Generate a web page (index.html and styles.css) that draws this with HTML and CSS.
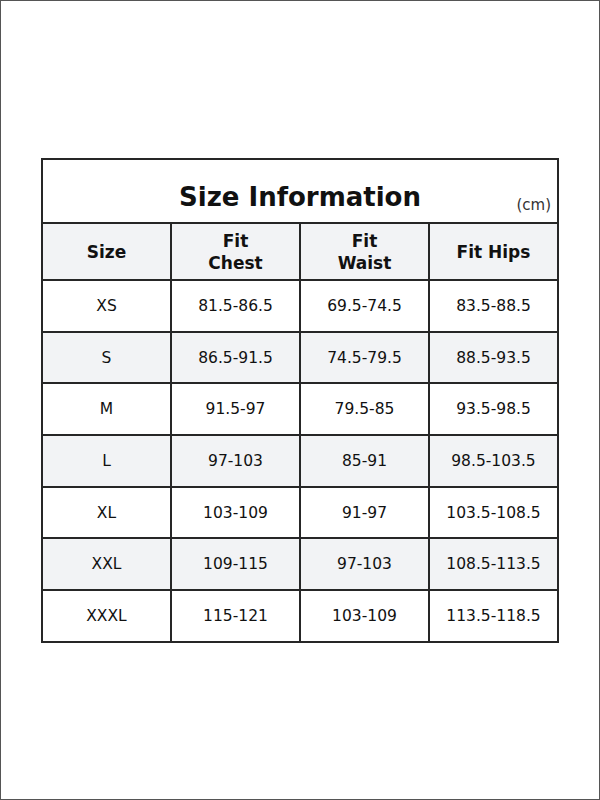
FILE: index.html
```html
<!DOCTYPE html>
<html>
<head>
<meta charset="utf-8">
<link rel="stylesheet" href="styles.css">
</head>
<body>
<div class="page">
  <table class="sizes">
    <colgroup><col><col><col><col></colgroup>
    <tr class="title-row">
      <td colspan="4">
        <div class="title-wrap">
          <span></span>
          <h1 class="title">Size Information</h1>
          <span class="unit">(cm)</span>
        </div>
      </td>
    </tr>
    <tr class="head">
      <th>Size</th>
      <th>Fit<br>Chest</th>
      <th>Fit<br>Waist</th>
      <th>Fit Hips</th>
    </tr>
    <tr><td>XS</td><td>81.5-86.5</td><td>69.5-74.5</td><td>83.5-88.5</td></tr>
    <tr class="alt"><td>S</td><td>86.5-91.5</td><td>74.5-79.5</td><td>88.5-93.5</td></tr>
    <tr><td>M</td><td>91.5-97</td><td>79.5-85</td><td>93.5-98.5</td></tr>
    <tr class="alt"><td>L</td><td>97-103</td><td>85-91</td><td>98.5-103.5</td></tr>
    <tr><td>XL</td><td>103-109</td><td>91-97</td><td>103.5-108.5</td></tr>
    <tr class="alt"><td>XXL</td><td>109-115</td><td>97-103</td><td>108.5-113.5</td></tr>
    <tr><td>XXXL</td><td>115-121</td><td>103-109</td><td>113.5-118.5</td></tr>
  </table>
</div>
</body>
</html>
```

FILE: styles.css
```css
html, body {
  margin: 0;
  padding: 0;
  background: #fff;
}
.page {
  box-sizing: border-box;
  width: 600px;
  height: 800px;
  border: 1px solid #555;
  padding-top: 157px;
  padding-left: 40px;
  font-family: "DejaVu Sans", sans-serif;
  color: #111;
}
.sizes {
  border-collapse: collapse;
  table-layout: fixed;
  width: 518px;
}
.sizes td, .sizes th {
  border: 2px solid #262626;
  text-align: center;
  vertical-align: middle;
  padding: 0;
  font-size: 15.5px;
  height: 49.7px;
}
.title-row td {
  height: 62px;
  padding: 0 6px;
}
.title-wrap {
  display: grid;
  grid-template-columns: 1fr auto 1fr;
  align-items: end;
  height: 62px;
}
.title {
  margin: 0;
  font-size: 26px;
  font-weight: bold;
  align-self: center;
  padding-top: 12px;
}
.unit {
  justify-self: end;
  font-size: 15px;
  color: #333;
  padding-bottom: 8px;
}
.head th {
  background: #f2f3f5;
  font-size: 17px;
  font-weight: bold;
  line-height: 22px;
  height: 55px;
}
.alt td {
  background: #f2f3f5;
}
```
